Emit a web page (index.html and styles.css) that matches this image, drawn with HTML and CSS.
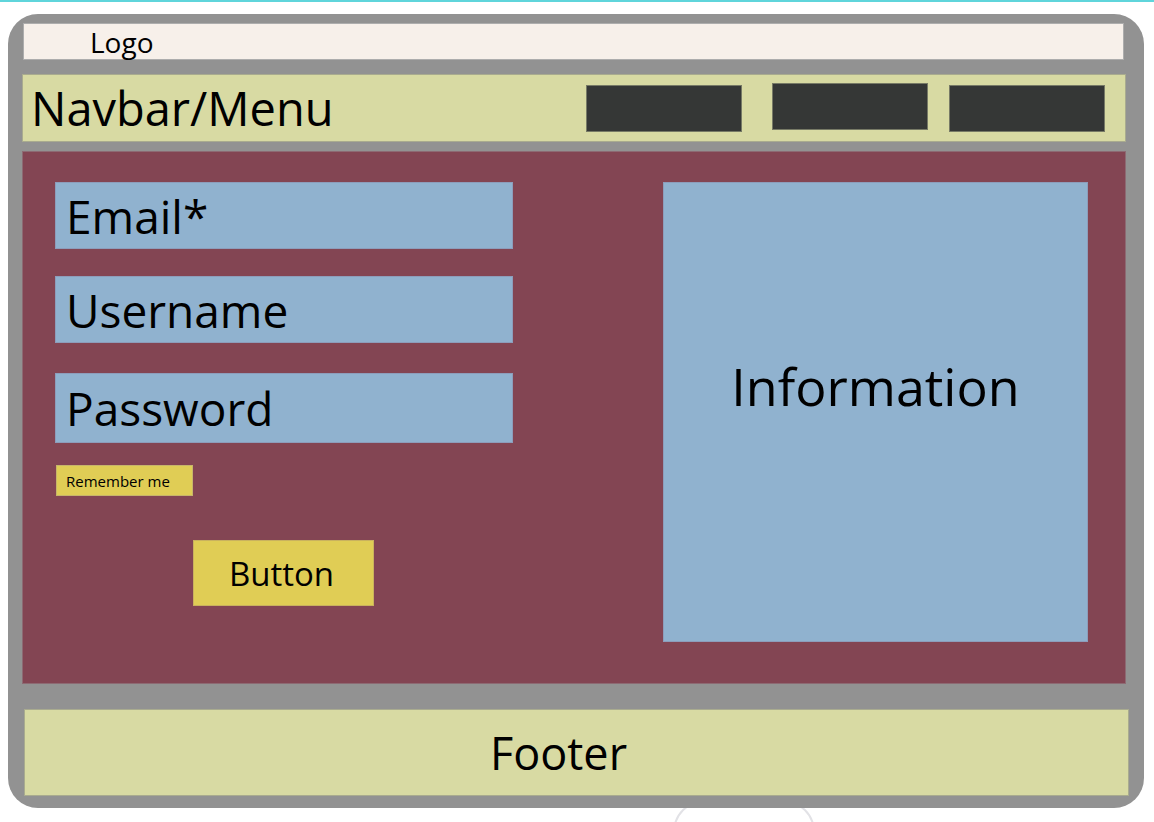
FILE: index.html
```html
<!DOCTYPE html>
<html lang="en">
<head>
    <meta charset="UTF-8">
    <meta name="viewport" content="width=device-width, initial-scale=1.0">
    <title>Wireframe - Sign up</title>
    <link rel="stylesheet" href="styles.css">
</head>
<body>
    <div class="page">
        <div class="frame">
            <header class="logo-bar">
                <span class="logo">Logo</span>
            </header>

            <nav class="navbar">
                <span class="navbar-title">Navbar/Menu</span>
                <div class="nav-items">
                    <a href="#" class="nav-btn"></a>
                    <a href="#" class="nav-btn nav-btn-mid"></a>
                    <a href="#" class="nav-btn nav-btn-last"></a>
                </div>
            </nav>

            <main class="content">
                <form class="signup-form">
                    <div class="field field-email">Email*</div>
                    <div class="field field-user">Username</div>
                    <div class="field field-pass">Password</div>
                    <label class="remember">Remember me</label>
                    <button type="button" class="btn">Button</button>
                </form>

                <aside class="info">
                    <span class="info-title">Information</span>
                </aside>
            </main>

            <footer class="footer">Footer</footer>
        </div>
        <div class="handle"></div>
    </div>
</body>
</html>
```

FILE: styles.css
```css
* {
    margin: 0;
    padding: 0;
    box-sizing: border-box;
    font-family: 'Open Sans', 'Noto Sans', sans-serif;
}

body {
    background-color: #ffffff;
    border-top: 2px solid #5fd5db;
    color: #000;
    overflow: hidden;
}

.page {
    position: relative;
    padding: 12px 10px 0 8px;
    height: 820px;
}

.frame {
    position: relative;
    z-index: 1;
    background-color: #929292;
    border-radius: 30px;
    height: 794px;
    padding: 9px 18px 12px 14px;
    display: flex;
    flex-direction: column;
}

.logo-bar {
    height: 37px;
    margin: 0 2px 0 1px;
    background-color: #f7f0ea;
    border: 1px solid #adadad;
    display: flex;
    align-items: center;
    padding-left: 66px;
}

.logo {
    font-size: 28px;
    line-height: 1;
}

.navbar {
    height: 68px;
    margin-top: 14px;
    background-color: #d8daa3;
    border: 1px solid #a9ab8f;
    display: flex;
    align-items: center;
    justify-content: space-between;
    padding: 0 20px 0 8px;
}

.navbar-title {
    font-size: 47px;
}

.nav-items {
    display: flex;
    align-items: center;
}

.nav-btn {
    display: block;
    width: 156px;
    height: 47px;
    background-color: #353736;
    border: 1px solid #777a66;
}

.nav-btn-mid {
    margin: 0 21px 3px 30px;
}

.content {
    height: 533px;
    margin-top: 9px;
    background-color: #834553;
    border: 1px solid #8d6a73;
    display: flex;
    justify-content: space-between;
    padding: 30px 37px 0 32px;
}

.signup-form {
    width: 458px;
    display: flex;
    flex-direction: column;
    align-items: flex-start;
}

.field {
    width: 458px;
    height: 67px;
    background-color: #90b2cf;
    border: 1px solid #8d9dbb;
    font-size: 46px;
    display: flex;
    align-items: center;
    padding-left: 10px;
}

.field-user {
    margin-top: 27px;
}

.field-pass {
    height: 70px;
    margin-top: 30px;
}

.remember {
    margin: 22px 0 0 1px;
    width: 137px;
    height: 31px;
    background-color: #e0cd55;
    border: 1px solid #c7b56a;
    font-size: 15px;
    display: flex;
    align-items: center;
    padding-left: 9px;
}

.btn {
    margin: 44px 0 0 138px;
    width: 181px;
    height: 66px;
    background-color: #e0cd55;
    border: 1px solid #c9b25e;
    font-size: 33px;
    color: #000;
    padding-right: 4px;
    cursor: pointer;
}

.info {
    width: 425px;
    height: 460px;
    background-color: #90b2cf;
    border: 1px solid #8d9dbb;
    display: flex;
    justify-content: center;
    padding-top: 167px;
}

.info-title {
    font-size: 52px;
    line-height: 71px;
    height: 71px;
}

.footer {
    height: 87px;
    margin: 25px -3px 0 2px;
    background-color: #d8daa3;
    border: 1px solid #a9ab8f;
    font-size: 45px;
    display: flex;
    align-items: center;
    justify-content: center;
    padding-right: 36px;
}

.handle {
    position: absolute;
    left: 673px;
    top: 798px;
    width: 142px;
    height: 60px;
    background-color: #fff;
    border: 2px solid #e2e2e6;
    border-radius: 32px 32px 0 0;
}
```
